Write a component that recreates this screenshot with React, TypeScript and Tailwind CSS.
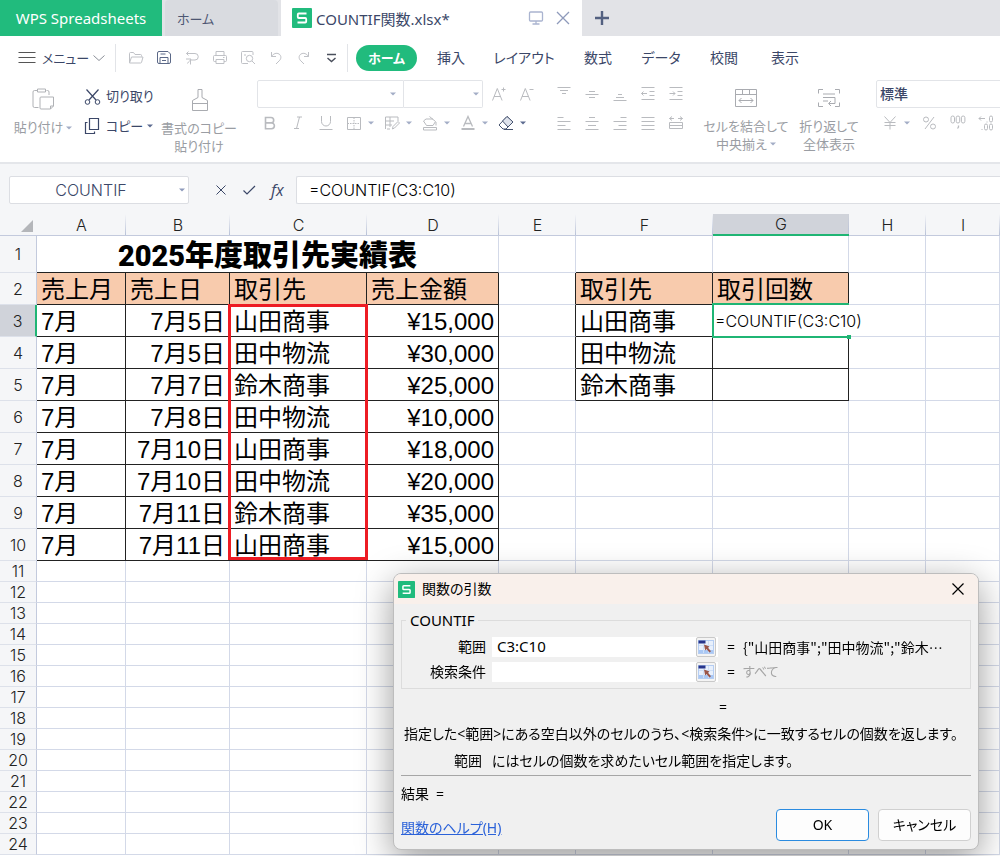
import { useEffect, useRef, useState } from "react";
import type { ReactNode, Ref } from "react";
import clsx from "clsx";

interface IconProps {
  children: ReactNode;
  className?: string;
  size?: number;
}

interface CellData {
  text: string;
  align?: "right";
  head?: boolean;
}

const COLUMNS = ["A", "B", "C", "D", "E", "F", "G", "H", "I"];
const ROW_COUNT = 24;

const sales = [
  ["7月", "7月5日", "山田商事", "¥15,000"],
  ["7月", "7月5日", "田中物流", "¥30,000"],
  ["7月", "7月7日", "鈴木商事", "¥25,000"],
  ["7月", "7月8日", "田中物流", "¥10,000"],
  ["7月", "7月10日", "山田商事", "¥18,000"],
  ["7月", "7月10日", "田中物流", "¥20,000"],
  ["7月", "7月11日", "鈴木商事", "¥35,000"],
  ["7月", "7月11日", "山田商事", "¥15,000"],
];

const cells: Record<string, CellData> = {
  A2: { text: "売上月", head: true },
  B2: { text: "売上日", head: true },
  C2: { text: "取引先", head: true },
  D2: { text: "売上金額", head: true },
  F2: { text: "取引先", head: true },
  G2: { text: "取引回数", head: true },
  F3: { text: "山田商事" },
  F4: { text: "田中物流" },
  F5: { text: "鈴木商事" },
};

sales.forEach(([month, day, client, amount], i) => {
  const row = i + 3;
  cells[`A${row}`] = { text: month };
  cells[`B${row}`] = { text: day, align: "right" };
  cells[`C${row}`] = { text: client };
  cells[`D${row}`] = { text: amount, align: "right" };
});

const ribbonTabs = [
  { label: "挿入", width: "w-[60px]" },
  { label: "レイアウト", width: "w-[86px]" },
  { label: "数式", width: "w-[62px]" },
  { label: "データ", width: "w-[64px]" },
  { label: "校閲", width: "w-[62px]" },
  { label: "表示", width: "w-[60px]" },
];

function Icon({ children, className, size = 16 }: IconProps) {
  return (
    <svg
      width={size}
      height={size}
      viewBox={`0 0 ${size} ${size}`}
      fill="none"
      stroke="currentColor"
      className={clsx("shrink-0", className)}
      aria-hidden="true"
    >
      {children}
    </svg>
  );
}

function Caret({ className = "text-[#a3adc6]" }: { className?: string }) {
  return (
    <svg width="6" height="4" viewBox="0 0 6 4" className={clsx("shrink-0", className)} aria-hidden="true">
      <path d="M0 0.5h6L3 3.6z" fill="currentColor" />
    </svg>
  );
}

function Logo({ size }: { size: number }) {
  return (
    <svg width={size} height={size} viewBox="0 0 20 20" className="shrink-0" aria-hidden="true">
      <rect width="20" height="20" rx="1" fill="#21bb7d" />
      <path d="M14.5 5.5H6.8a1 1 0 0 0-1 1V9a1 1 0 0 0 1 1h6.4a1 1 0 0 1 1 1v2.5a1 1 0 0 1-1 1H5.5" fill="none" stroke="#fff" strokeWidth="1.8" />
    </svg>
  );
}

function TitleTabs() {
  return (
    <div className="flex h-9 bg-[#e2e3e7]">
      <button className="w-[162px] shrink-0 whitespace-nowrap bg-[#21bb7d] text-[15px] text-white">WPS Spreadsheets</button>
      <button className="ml-[3px] w-[113px] shrink-0 rounded-t-sm bg-[#d9dbe0] pl-3 pt-1 text-left text-[13px] text-[#4d5672]">
        ホーム
      </button>
      <div className="ml-[3px] flex w-[301px] shrink-0 items-center bg-white pl-[11px] pr-3">
        <Logo size={20} />
        <span className="ml-1 flex-1 whitespace-nowrap pt-[2px] text-[15px] text-[#3b4768]">COUNTIF関数.xlsx*</span>
        <button aria-label="デスクトップ" className="text-[#aab4d0]">
          <Icon>
            <rect x="1.5" y="2" width="13" height="9" rx="1" strokeWidth="1.3" />
            <path d="M8 11v3M4.5 14h7" strokeWidth="1.3" />
          </Icon>
        </button>
        <button aria-label="閉じる" className="ml-3 text-[#8e9abb]">
          <Icon size={14}>
            <path d="M1 1l12 12M13 1l-12 12" strokeWidth="1.3" />
          </Icon>
        </button>
      </div>
      <button aria-label="新しいタブ" className="ml-3 text-[#536080]">
        <Icon size={16}>
          <path d="M8 1v14M1 8h14" strokeWidth="2.4" />
        </Icon>
      </button>
    </div>
  );
}

function QuickAccess() {
  const items = [
    {
      label: "開く",
      icon: <path d="M1.5 12.5v-9a1 1 0 0 1 1-1h3l1.5 2h5.5a1 1 0 0 1 1 1v1M1.5 13l2-6h11.5l-1.5 5.5a1 1 0 0 1-1 .5z" />,
    },
    {
      label: "保存",
      icon: <path d="M1.5 3a1.5 1.5 0 0 1 1.5-1.5h9l2.5 2.5v8a1.5 1.5 0 0 1-1.5 1.5h-10a1.5 1.5 0 0 1-1.5-1.5zM4 13.5v-6h8v6M4.5 4h5M6 10.5h4" />,
      active: true,
    },
    {
      label: "変換",
      icon: (
        <>
          <path d="M4.5 1.5l-2 2 2 2M2.500 3.500h8.500a3 3 0 0 1 0 6.500h-4.500v4.500" />
          <path d="M2 9h5c-.5 2-2.500 2-3.500 4.500" />
        </>
      ),
    },
    {
      label: "印刷",
      icon: <path d="M4 5.500v-4h8v4M4 11.500h-1.500a1 1 0 0 1-1-1v-4a1 1 0 0 1 1-1h11a1 1 0 0 1 1 1v4a1 1 0 0 1-1 1h-1.500M4 9.500h8v4h-8zM11 7.500h1.500" />,
    },
    {
      label: "プレビュー",
      icon: (
        <>
          <path d="M13 5v-2.500a1 1 0 0 0-1-1h-9.500a1 1 0 0 0-1 1v10a1 1 0 0 0 1 1h5.500M4 5h2M12 11l3 3" />
          <circle cx="9.500" cy="8.500" r="3.200" />
        </>
      ),
    },
    { label: "元に戻す", icon: <path d="M3.500 2v4.500h4.500M3.500 6.500c2-3 5-4 7.500-2.500s2.500 5 0 7l-3 3" /> },
    { label: "やり直し", icon: <path d="M12.500 2v4.500h-4.500M12.500 6.500c-2-3-5-4-7.500-2.500s-2.500 5 0 7l3 3" /> },
  ];
  return (
    <div className="flex gap-3">
      {items.map((item) => (
        <button key={item.label} aria-label={item.label} className={item.active ? "text-[#5b6887]" : "text-[#bfc1c6]"}>
          <Icon>{item.icon}</Icon>
        </button>
      ))}
      <button aria-label="カスタマイズ" className="text-[#4a4f5c]">
        <Icon size={14}>
          <path d="M3 3.500h9M3.500 7l4 3.500 4-3.500" strokeWidth="1.400" />
        </Icon>
      </button>
    </div>
  );
}

function MenuBar() {
  return (
    <div className="flex h-11 items-center whitespace-nowrap text-sm text-[#3b4768]">
      <button className="ml-[18px] flex items-center text-[13px]">
        <Icon size={18} className="text-[#555]">
          <path d="M0.500 3.500h17M0.500 8.500h17M0.500 13.500h17" strokeWidth="1.200" />
        </Icon>
        <span className="ml-[6px] w-[45px] text-left">メニュー</span>
        <Icon size={12} className="ml-[6px] text-[#8b8f98]">
          <path d="M0.500 3.500l5.500 5 5.500-5" />
        </Icon>
      </button>
      <div className="ml-[10px] mr-3 h-7 w-px bg-[#e2e4e8]" />
      <QuickAccess />
      <div className="ml-[9px] mr-2 h-7 w-px bg-[#e2e4e8]" />
      <button className="h-[26px] w-[61px] rounded-full bg-[#21bb7d] text-[13px] font-bold text-white">ホーム</button>
      <div className="ml-1 flex">
        {ribbonTabs.map((tab) => (
          <button key={tab.label} className={clsx("text-center", tab.width)}>
            {tab.label}
          </button>
        ))}
      </div>
    </div>
  );
}

function ToolButton({ label, caret, children, dark }: { label: string; caret?: boolean; children: ReactNode; dark?: boolean }) {
  return (
    <button
      aria-label={label}
      className={clsx("flex items-center gap-[6px]", dark ? "text-[#46536f]" : "text-[#b9bbbf]")}
    >
      <Icon>{children}</Icon>
      {caret && <Caret className={dark ? "text-[#5d6b90]" : "text-[#a3adc6]"} />}
    </button>
  );
}

function FontGroup() {
  return (
    <div className="ml-[21px] flex shrink-0 flex-col">
      <div className="flex h-7 items-center">
        <div className="relative h-7 w-[147px]">
          <select aria-label="フォント" className="h-7 w-full appearance-none rounded-l-xs border border-[#e2e4e8] bg-white" />
          <Caret className="pointer-events-none absolute right-2 top-3 text-[#a3adc6]" />
        </div>
        <div className="relative h-7 w-[79px]">
          <select aria-label="フォントサイズ" className="h-7 w-full appearance-none rounded-r-xs border border-l-0 border-[#e2e4e8] bg-white" />
          <Caret className="pointer-events-none absolute right-1 top-3 text-[#a3adc6]" />
        </div>
        <div className="ml-2 flex gap-3">
          <ToolButton label="拡大">
            <path d="M1.500 14.500l4.800-12 4.800 12M3 10.500h6.500M10.500 3.500h4M12.500 1.500v4" />
          </ToolButton>
          <ToolButton label="縮小">
            <path d="M1.500 14.500l4.800-12 4.800 12M3 10.500h6.500M10.500 3.500h4" />
          </ToolButton>
        </div>
      </div>
      <div className="ml-[5px] mt-[7px] flex h-4 items-center gap-3">
        <ToolButton label="太字">
          <path d="M3.500 2.500h5.500a2.700 2.700 0 0 1 0 5.400h-5.500zM3.500 7.900h6a2.900 2.900 0 0 1 0 5.800h-6z" strokeWidth="1.600" />
        </ToolButton>
        <ToolButton label="斜体">
          <path d="M7 2h5M4 13.500h5M9.500 2l-3 11.500" />
        </ToolButton>
        <ToolButton label="下線">
          <path d="M3.500 1v5.500a4.500 4.500 0 0 0 9 0v-5.500M1.500 14.500h13" />
        </ToolButton>
        <div className="flex gap-[10px]">
          <ToolButton label="罫線" caret>
            <path d="M1.500 2.500h13v12h-13z" />
            <path d="M8 2.500v12M1.500 8.500h13" strokeDasharray="1.500 1" />
          </ToolButton>
          <ToolButton label="スタイル" caret>
            <path d="M1.500 14v-12h12.500v4M1.500 6h8.500M6 2v10M1.500 10h6.500M8.500 14l.500-2.500 5-5 1.500 1.500-5 5zM3 14h3" />
          </ToolButton>
          <ToolButton label="塗りつぶし" caret>
            <path d="M7.500 1.500l6 5-2.500 4h-6.500l-3-4.500 2.500-2h7M14 7v3.500M1.500 12.500h13v2.500h-13z" />
          </ToolButton>
          <ToolButton label="文字色" caret>
            <path d="M3.500 11.500l4.500-10 4.500 10M5 8.500h6" strokeWidth="1.300" />
            <path d="M1.500 14h13" strokeWidth="2" />
          </ToolButton>
          <ToolButton label="クリア" caret dark>
            <path d="M9 1.500l6 5.500-7 7h-3l-4-4z" />
            <path d="M9 1.500l6 5.500-5 5-5.500-6z" fill="#dfe3ec" />
            <path d="M6 14.500h9" />
          </ToolButton>
        </div>
      </div>
    </div>
  );
}

const alignIcons = [
  { label: "上揃え", d: "M1.5 1.5h13M4 4.500h8M6 7.500h4" },
  { label: "上下中央揃え", d: "M5 5.500h6M1.500 8.500h13M5 11.500h6" },
  { label: "下揃え", d: "M6 8.500h4M4 11.500h8M1.500 14.500h13" },
  { label: "インデントを減らす", d: "M1.500 1.500h13M9.500 5.500h5M9.500 9.500h5M1.500 13.500h13M7 7.500h-5.500M3.500 5.500l-2 2 2 2" },
  { label: "インデントを増やす", d: "M1.500 1.500h13M9.500 5.500h5M9.500 9.500h5M1.500 13.500h13M1.500 7.500h5.500M5 5.500l2 2-2 2" },
  { label: "左揃え", d: "M1.500 2.500h6M1.500 6.500h13M1.500 10.500h8M1.500 14.500h13" },
  { label: "中央揃え", d: "M5 2.500h6M1.500 6.500h13M4 10.500h8M1.500 14.500h13" },
  { label: "右揃え", d: "M8.500 2.500h6M1.500 6.500h13M6.500 10.500h8M1.500 14.500h13" },
  { label: "両端揃え", d: "M1.500 2.500h13M1.500 6.500h13M1.500 10.500h13M1.500 14.500h13" },
  { label: "均等割り付け", d: "M1.500 7.500v6h13v-6M1.500 10.500h13M4 1.500l-2.500 2 2.500 2M1.500 3.500h4.500M12 1.500l2.500 2-2.500 2M14.500 3.500h-4.500M1.500 7.500h13" },
];

function Ribbon() {
  return (
    <div className="flex h-[84px] items-start overflow-hidden whitespace-nowrap border-b-2 border-[#e4e6ea] text-[13px] text-[#3b4768]">
      <button className="ml-[13px] mt-[7px] flex w-[60px] shrink-0 flex-col items-center text-[#9a9da3]">
        <Icon size={24} className="mb-[7px] text-[#b0b2b6]">
          <path d="M6.500 3.500h-3a1.500 1.500 0 0 0-1.500 1.500v14a1.500 1.500 0 0 0 1.500 1.500h4M15.500 3.500h1a1.500 1.500 0 0 1 1.500 1.500v3M6.500 2h8v3h-8z" />
          <path d="M10 10h12.500v9l-3 3h-9.500a1 1 0 0 1-1-1v-10a1 1 0 0 1 1-1zM22.500 19h-3v3" />
        </Icon>
        <span className="flex items-center gap-[3px]">
          貼り付け
          <Caret />
        </span>
      </button>
      <div className="ml-[11px] flex w-[72px] shrink-0 flex-col gap-[10px] pt-[7px]">
        <button className="flex items-center gap-1">
          <Icon size={18}>
            <circle cx="3.500" cy="14" r="2.300" />
            <circle cx="13.500" cy="14" r="2.300" />
            <path d="M2.500 1.500l9.500 10.500M14.500 1.500l-9.500 10.500" strokeWidth="1.200" />
          </Icon>
          切り取り
        </button>
        <button className="flex items-center gap-1">
          <Icon size={18}>
            <path d="M5.500 1.500h9v11h-9zM3.500 5.500h-2v11h9v-2" strokeWidth="1.200" />
          </Icon>
          コピー
          <Caret className="text-[#5d6b90]" />
        </button>
      </div>
      <button className="ml-[6px] mt-[7px] flex w-[74px] shrink-0 flex-col items-center leading-[18px] text-[#9a9da3]">
        <Icon size={24} className="mb-2 text-[#a9abb0]">
          <path d="M11 10.500v-8h4v8l5.500 3v10h-15v-10l5.500-3" />
          <path d="M5.500 16.500h15" />
        </Icon>
        <span>書式のコピー</span>
        <span>貼り付け</span>
      </button>
      <FontGroup />
      <div className="ml-[21px] mt-[6px] grid shrink-0 grid-cols-5 gap-x-3 gap-y-[13px]">
        {alignIcons.map((item) => (
          <ToolButton key={item.label} label={item.label}>
            <path d={item.d} />
          </ToolButton>
        ))}
      </div>
      <button className="ml-[18px] mt-[6px] flex w-[88px] shrink-0 flex-col items-center leading-[18px] text-[#9a9da3]">
        <Icon size={24} className="mb-[7px] text-[#a9abb0]">
          <path d="M1.500 3.500h21v17h-21zM1.500 8.500h21M8.500 3.500v5M15.500 3.500v5M5 14.500h14M7.500 12l-2.500 2.500 2.500 2.500M16.500 12l2.500 2.500-2.500 2.500" />
        </Icon>
        <span>セルを結合して</span>
        <span className="flex items-center gap-[3px]">
          中央揃え
          <Caret />
        </span>
      </button>
      <button className="ml-2 mt-[6px] flex w-[62px] shrink-0 flex-col items-center leading-[18px] text-[#9a9da3]">
        <Icon size={24} className="mb-[7px] text-[#a9abb0]">
          <path d="M6 3.500h-4.500v4M18 3.500h4.500v4M1.500 16.500v4h4.500M22.500 16.500v4h-4.500M6 8h12M6 11.500h12M6 15h5M18 11.500v6h-6M14 15l-2.500 2.500 2.500 2.500" />
        </Icon>
        <span>折り返して</span>
        <span>全体表示</span>
      </button>
      <div className="ml-4 min-w-[130px] flex-1">
        <select
          aria-label="表示形式"
          className="h-7 w-full appearance-none rounded-l-xs border border-[#e2e4e8] bg-white px-[3px] text-sm font-medium"
        >
          <option>標準</option>
        </select>
        <div className="ml-[6px] mt-[7px] flex gap-3">
          <ToolButton label="通貨" caret>
            <path d="M2.500 1.500l5.500 6 5.500-6M8 7.500v7M2.500 7.500h11M2.500 10.500h11" />
          </ToolButton>
          <ToolButton label="パーセント">
            <circle cx="4" cy="4.500" r="2.500" />
            <circle cx="11" cy="11.500" r="2.500" />
            <path d="M12 2l-9 12" />
          </ToolButton>
          <ToolButton label="桁区切り">
            <rect x="1" y="1" width="3.500" height="7" rx="1.700" />
            <rect x="6.200" y="1" width="3.500" height="7" rx="1.700" />
            <rect x="11.400" y="1" width="3.500" height="7" rx="1.700" />
            <path d="M8.500 10.500v1.500l-1 1.500" strokeWidth="1.300" />
          </ToolButton>
          <ToolButton label="小数点">
            <path d="M7 3.500h-6M3 1.500l-2 2 2 2M9 6.500v1M4 14v1" />
            <rect x="11.500" y="1" width="3" height="6" rx="1.500" />
            <rect x="6.500" y="9" width="3" height="6" rx="1.500" />
            <rect x="11.500" y="9" width="3" height="6" rx="1.500" />
          </ToolButton>
        </div>
      </div>
    </div>
  );
}

function FormulaBar({ formula, onChange }: { formula: string; onChange: (v: string) => void }) {
  return (
    <div className="flex h-[50px] items-start pt-3 text-[#3b4768]">
      <div className="relative ml-[9px] h-7 w-[180px] shrink-0">
        <input
          aria-label="名前ボックス"
          defaultValue="COUNTIF"
          className="h-7 w-full rounded-xs border border-[#dcdee3] bg-white pr-4 text-center text-base font-light font-['Inter',sans-serif]"
        />
        <Caret className="absolute right-1 top-3 text-[#8e9abb]" />
      </div>
      <div className="ml-[26px] flex h-7 w-[81px] shrink-0 items-center gap-[15px]">
        <button aria-label="キャンセル">
          <Icon size={12}>
            <path d="M1.500 1.500l9 9M10.500 1.500l-9 9" />
          </Icon>
        </button>
        <button aria-label="入力">
          <Icon size={14}>
            <path d="M1.500 7.500l3.500 3.500 8-8" strokeWidth="1.200" />
          </Icon>
        </button>
        <button className="text-base italic font-['Open_Sans',sans-serif]">fx</button>
      </div>
      <input
        aria-label="数式"
        value={formula}
        onChange={(e) => onChange(e.target.value)}
        className="h-7 min-w-0 flex-1 rounded-l-xs border border-r-0 border-[#dcdee3] bg-white px-3 text-base font-light text-black font-['Inter',sans-serif]"
      />
    </div>
  );
}

function rowHeight(row: number) {
  if (row === 1) return "h-[37px]";
  return row <= 10 ? "h-8" : "h-[21px]";
}

// 表の範囲 (A2:D10, F2:G5) は黒罫線
function isBoxed(col: string, row: number) {
  if (row < 2) return false;
  return ("ABCD".includes(col) && row <= 10) || ("FG".includes(col) && row <= 5);
}

function Cell({ col, row, formula, onChange }: { col: string; row: number; formula: string; onChange: (v: string) => void }) {
  const data = cells[`${col}${row}`];
  const boxed = isBoxed(col, row);
  const blackRight = boxed || (col === "E" && row >= 2 && row <= 5);
  const blackBottom = boxed || (row === 1 && "FG".includes(col));
  return (
    <td
      className={clsx(
        "relative whitespace-nowrap border-b border-r p-0",
        blackRight ? "border-r-[#222]" : "border-r-[#d3d9e8]",
        blackBottom ? "border-b-[#222]" : "border-b-[#d3d9e8]",
        data?.head && "bg-[#f8cbad]",
        data && "pt-[3px]",
        data?.align === "right" ? "pr-1 text-right" : "pl-1"
      )}
    >
      {data?.text}
      {col === "C" && row === 3 && (
        <span className="pointer-events-none absolute -left-[2px] -top-px z-10 h-[256px] w-[calc(100%+4px)] border-3 border-[#ed1c24]" />
      )}
      {col === "G" && row === 3 && (
        <>
          <input
            aria-label="G3"
            value={formula}
            onChange={(e) => onChange(e.target.value)}
            className="absolute left-0 top-0 z-10 h-[31px] w-[150px] bg-white pl-[2px] text-base font-light text-black outline-none font-['Inter',sans-serif]"
          />
          <span className="pointer-events-none absolute -left-px -top-[2px] z-10 h-[35px] w-[calc(100%+2px)] border-y-2 border-l-2 border-[#1fb574]" />
          <span className="absolute -bottom-[3px] -right-[3px] z-10 h-1 w-1 bg-[#1fb574]" />
        </>
      )}
    </td>
  );
}

function Sheet({ formula, onChange }: { formula: string; onChange: (v: string) => void }) {
  const rows = Array.from({ length: ROW_COUNT }, (_, i) => i + 1);
  return (
    <table className="w-full min-w-[960px] table-fixed border-separate border-spacing-0 bg-white text-2xl leading-none text-black [font-feature-settings:normal] font-['Liberation_Sans','Noto_Sans_CJK_JP',sans-serif]">
      <colgroup>
        <col className="w-[37px]" />
        <col className="w-[89px]" />
        <col className="w-[104px]" />
        <col className="w-[137px]" />
        <col className="w-[132px]" />
        <col className="w-[77px]" />
        <col className="w-[137px]" />
        <col className="w-[136px]" />
        <col className="w-[77px]" />
        <col />
      </colgroup>
      <thead>
        <tr className="h-[22px] bg-[#f5f6f8] text-base font-light leading-none text-[#222] font-['Inter',sans-serif]">
          <th className="relative border-b border-[#c3cadd] p-0">
            <svg width="12" height="12" className="absolute bottom-[3px] right-1" aria-hidden="true">
              <path d="M12 0v12H0z" fill="#b4b6ba" />
            </svg>
          </th>
          {COLUMNS.map((col) => (
            <th
              key={col}
              scope="col"
              className={clsx(
                "relative p-0 font-light after:absolute after:inset-y-0 after:right-0 after:w-px after:bg-linear-to-t after:from-[#b9c2d8] after:to-transparent",
                col === "G" ? "border-b-2 border-[#1fb574] bg-[#d0d3da]" : "border-b border-[#c3cadd]"
              )}
            >
              {col}
            </th>
          ))}
        </tr>
      </thead>
      <tbody>
        {rows.map((row) => (
          <tr key={row} className={rowHeight(row)}>
            <th
              scope="row"
              className={clsx(
                "border-b border-r border-b-[#dde1ea] p-0 text-base font-light leading-none text-[#222] font-['Inter',sans-serif]",
                row === 3 ? "border-r-2 border-r-[#1fb574] bg-[#d0d3da]" : "border-r-[#c3cadd] bg-[#f5f6f8]"
              )}
            >
              {row}
            </th>
            {row === 1 && (
              <td
                colSpan={4}
                className="whitespace-nowrap border-b border-r border-b-[#222] border-r-[#d3d9e8] p-0 pt-1 text-center text-[29px] font-black leading-none font-['Roboto','Noto_Sans_CJK_JP',sans-serif]"
              >
                2025年度取引先実績表
              </td>
            )}
            {(row === 1 ? COLUMNS.slice(4) : COLUMNS).map((col) => (
              <Cell key={col} col={col} row={row} formula={formula} onChange={onChange} />
            ))}
          </tr>
        ))}
      </tbody>
    </table>
  );
}

interface ArgumentRowProps {
  id: string;
  label: string;
  value: string;
  onChange: (v: string) => void;
  result: string;
  muted?: boolean;
  inputRef?: Ref<HTMLInputElement>;
}

function ArgumentRow({ id, label, value, onChange, result, muted, inputRef }: ArgumentRowProps) {
  return (
    <div className="flex h-[25px] items-center">
      <label htmlFor={id} className="w-[84px] shrink-0 text-right">
        {label}
      </label>
      <div className="ml-[6px] flex h-5 w-[226px] shrink-0 items-center bg-white pr-[2px]">
        <input
          id={id}
          ref={inputRef}
          value={value}
          onChange={(e) => onChange(e.target.value)}
          className="h-5 min-w-0 flex-1 bg-white pl-[5px] text-[15px] outline-none"
        />
        <button aria-label={`${label}を選択`} className="rounded-xs border border-[#c9c9c9] bg-[#f4f4f4] p-px">
          <svg width="16" height="16" viewBox="0 0 16 16" aria-hidden="true">
            <rect x="0.500" y="1.500" width="15" height="13" fill="#e8f0fc" stroke="#b5cdf2" />
            <path d="M1 11h14v3h-14z" fill="#a9c8f5" />
            <path d="M1 6.500h14M5.500 5v9M10.500 2v12" stroke="#cfdff6" />
            <rect x="0.500" y="1.500" width="7" height="3" fill="#26348b" />
            <path d="M6 5.500l5.500 2-1.500 1.200 3 3.500-1.500 1.300-3-3.500-1.300 1.500z" fill="#9b5548" />
          </svg>
        </button>
      </div>
      <span className="ml-[9px] w-4">=</span>
      <span
        className={clsx(
          "min-w-0 flex-1 whitespace-nowrap font-['Noto_Sans_CJK_JP',sans-serif]",
          muted ? "text-[13px] text-[#a5a5a5]" : "[font-feature-settings:normal]"
        )}
      >
        {result}
      </span>
    </div>
  );
}

function FunctionDialog() {
  const [range, setRange] = useState("C3:C10");
  const [criteria, setCriteria] = useState("");
  const rangeRef = useRef<HTMLInputElement>(null);

  useEffect(() => {
    const input = rangeRef.current;
    if (!input) return;
    input.focus();
    input.setSelectionRange(input.value.length, input.value.length);
  }, []);

  return (
    <div
      role="dialog"
      aria-label="関数の引数"
      className="absolute left-[393px] top-[573px] z-20 w-[586px] overflow-hidden rounded-lg border border-[#bdbdbd] bg-[#f0f0f0] text-sm text-black shadow-[0_10px_36px_rgba(0,0,0,0.4)]"
    >
      <div className="flex h-[30px] items-center bg-[#f9f0eb] pl-1 pr-[13px]">
        <Logo size={17} />
        <span className="ml-[7px] flex-1">関数の引数</span>
        <button aria-label="閉じる">
          <Icon size={14}>
            <path d="M1.500 1.500l11 11M12.500 1.500l-11 11" strokeWidth="1.200" />
          </Icon>
        </button>
      </div>
      <div className="px-[7px] pb-2 pt-[6px]">
        <fieldset className="border border-[#dcdcdc] pb-1">
          <legend className="ml-1 h-5 px-1 text-[15px] leading-5">COUNTIF</legend>
          <div className="pt-1">
            <ArgumentRow
              id="range"
              label="範囲"
              value={range}
              onChange={setRange}
              inputRef={rangeRef}
              result={'{"山田商事";"田中物流";"鈴木…'}
            />
            <ArgumentRow id="criteria" label="検索条件" value={criteria} onChange={setCriteria} result="すべて" muted />
          </div>
        </fieldset>
        <p className="mt-2 pl-[318px] leading-5">=</p>
        <p className="mt-[7px] whitespace-nowrap pl-[3px] leading-5">
          指定した&lt;範囲&gt;にある空白以外のセルのうち、&lt;検索条件&gt;に一致するセルの個数を返します。
        </p>
        <p className="mt-[7px] flex gap-[10px] whitespace-nowrap pl-[53px] leading-5">
          <span>範囲</span>
          <span>にはセルの個数を求めたいセル範囲を指定します。</span>
        </p>
        <hr className="mt-1 border-[#a6a6a6]" />
        <p className="mt-2 flex gap-[7px] leading-5">
          <span>結果</span>
          <span>=</span>
        </p>
        <div className="mt-[5px] flex items-center gap-[9px]">
          <a href="#help" className="mt-[6px] flex-1 text-[#2b62d9] underline">
            関数のヘルプ(H)
          </a>
          <button className="h-8 w-[93px] rounded-sm border border-[#2a8be0] bg-[#fdfdfd]">OK</button>
          <button className="h-8 w-[93px] rounded-sm border border-[#d0d0d0] bg-[#fdfdfd]">キャンセル</button>
        </div>
      </div>
    </div>
  );
}

export default function App() {
  const [formula, setFormula] = useState("=COUNTIF(C3:C10)");

  return (
    <div className="relative h-screen overflow-hidden bg-white font-['Noto_Sans','Noto_Sans_CJK_JP',sans-serif] [font-feature-settings:'palt']">
      <TitleTabs />
      <MenuBar />
      <Ribbon />
      <div className="bg-[#f5f6f8]">
        <FormulaBar formula={formula} onChange={setFormula} />
        <Sheet formula={formula} onChange={setFormula} />
      </div>
      <FunctionDialog />
    </div>
  );
}
